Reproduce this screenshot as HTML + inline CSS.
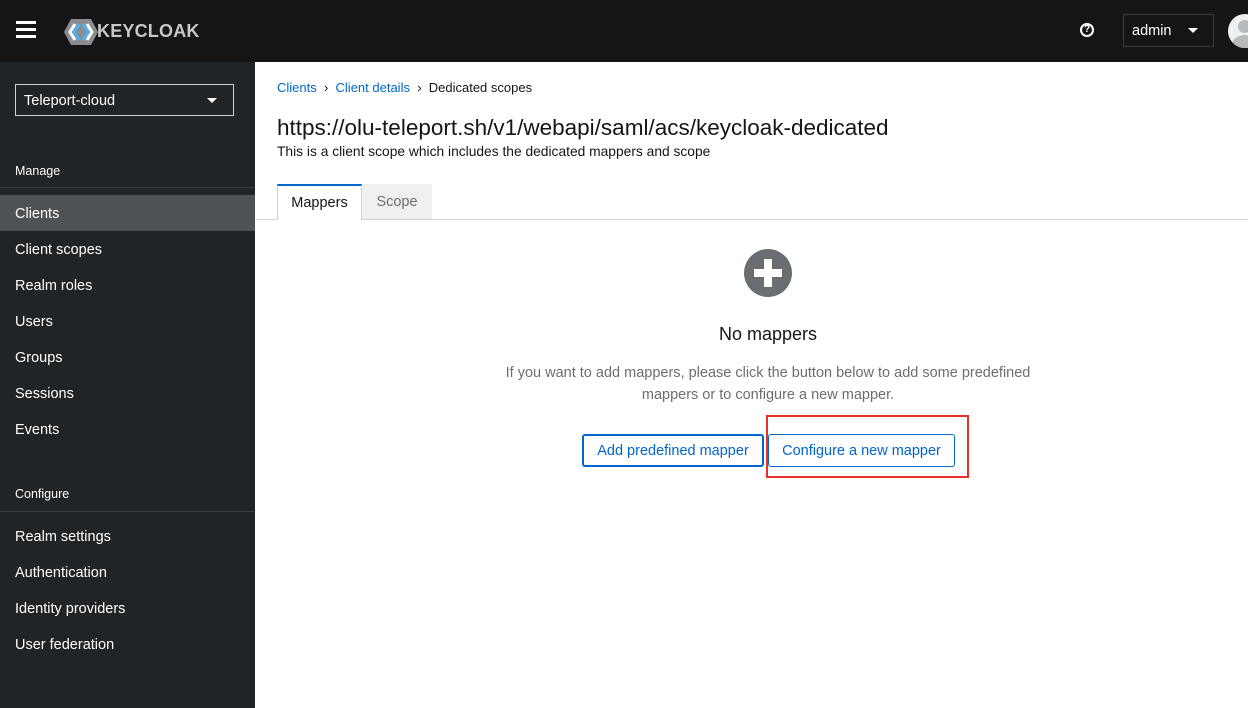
<!DOCTYPE html>
<html><head><style>
*{margin:0;padding:0;box-sizing:border-box}
body{width:1248px;height:708px;overflow:hidden;font-family:"Liberation Sans",sans-serif;background:#fff;position:relative}
.hdr{position:absolute;left:0;top:0;width:1248px;height:62px;background:#151515}
.side{position:absolute;left:0;top:62px;width:255px;height:646px;background:#212427;color:#fff}
.a{position:absolute}
.nav{position:absolute;left:15px;font-size:14.5px;color:#fff}
.sep{position:absolute;left:0;width:255px;height:1px;background:#3c3f42}
</style></head><body>
<div class="hdr">
 <div class="a" style="left:16px;top:21px;width:20px;height:3px;background:#fff;box-shadow:0 7px 0 #fff,0 14px 0 #fff"></div>
 <svg class="a" style="left:63px;top:18px" width="36" height="28" viewBox="0 0 36 28"><polygon points="8,1 28,1 35,14 28,27 8,27 1,14" fill="#8a8d90"/><path d="M12 6 L7 14 L12 22" stroke="#fff" stroke-width="3" fill="none"/><path d="M16 6 L11 14 L16 22" stroke="#4bb4ec" stroke-width="3" fill="none"/><path d="M20 6 L25 14 L20 22" stroke="#4bb4ec" stroke-width="3" fill="none"/><path d="M24 6 L29 14 L24 22" stroke="#fff" stroke-width="3" fill="none"/></svg>
 <div class="a" style="left:97px;top:21px;font-size:18px;font-weight:bold;color:#c7c7c7;letter-spacing:0.2px">KEYCLOAK</div>
 <div class="a" style="left:1080px;top:23px;width:14px;height:14px;border:2px solid #fff;border-radius:50%;color:#fff;font-size:10px;font-weight:bold;text-align:center;line-height:10px">?</div>
 <div class="a" style="left:1123px;top:14px;width:91px;height:33px;border:1px solid #3c3f42;color:#fff;font-size:14.5px;padding:8px 0 0 8px">admin<span class="a" style="left:64px;top:13px;border:5px solid transparent;border-top:5px solid #fff"></span></div>
 <div class="a" style="left:1228px;top:14px;width:34px;height:34px;border-radius:50%;background:#f0f0f0;overflow:hidden"><div class="a" style="left:10px;top:6px;width:13px;height:13px;border-radius:50%;background:#b8bbbe"></div><div class="a" style="left:4px;top:21px;width:26px;height:20px;border-radius:50%;background:#b8bbbe"></div></div>
</div>
<div class="side">
 <div class="a" style="left:15px;top:22px;width:219px;height:32px;border:1px solid #d2d2d2;padding:8px 0 0 8px;font-size:14.5px">Teleport-cloud<span class="a" style="left:191px;top:13px;border:5px solid transparent;border-top:5px solid #fff"></span></div>
 <div class="nav" style="top:102px;font-size:12.5px">Manage</div>
 <div class="sep" style="top:125px"></div>
 <div class="a" style="left:0;top:133px;width:255px;height:36px;background:#4f5255"></div>
 <div class="nav" style="top:144px">Clients</div>
 <div class="nav" style="top:180px">Client scopes</div>
 <div class="nav" style="top:216px">Realm roles</div>
 <div class="nav" style="top:252px">Users</div>
 <div class="nav" style="top:288px">Groups</div>
 <div class="nav" style="top:324px">Sessions</div>
 <div class="nav" style="top:360px">Events</div>
 <div class="nav" style="top:425px;font-size:12.5px">Configure</div>
 <div class="sep" style="top:449px"></div>
 <div class="nav" style="top:467px">Realm settings</div>
 <div class="nav" style="top:503px">Authentication</div>
 <div class="nav" style="top:539px">Identity providers</div>
 <div class="nav" style="top:575px">User federation</div>
</div>
<div class="a" style="left:277px;top:80px;font-size:13px;color:#151515"><span style="color:#06c">Clients</span> &nbsp;›&nbsp; <span style="color:#06c">Client details</span> &nbsp;›&nbsp; Dedicated scopes</div>
<div class="a" style="left:277px;top:115px;font-size:22.5px;color:#151515">https://olu-teleport.sh/v1/webapi/saml/acs/keycloak-dedicated</div>
<div class="a" style="left:277px;top:144px;font-size:13.8px;color:#151515">This is a client scope which includes the dedicated mappers and scope</div>
<div class="a" style="left:256px;top:219px;width:992px;height:1px;background:#d2d2d2"></div>
<div class="a" style="left:277px;top:184px;width:85px;height:36px;border:1px solid #d2d2d2;border-bottom:none;border-top:2px solid #06c;background:#fff;font-size:14.5px;color:#151515;text-align:center;padding-top:9px">Mappers</div>
<div class="a" style="left:362px;top:184px;width:70px;height:35px;background:#f0f0f0;font-size:14.5px;color:#6a6e73;text-align:center;padding-top:10px">Scope</div>
<svg class="a" style="left:744px;top:249px" width="48" height="48" viewBox="0 0 48 48"><circle cx="24" cy="24" r="24" fill="#6a6e73"/><rect x="20" y="10" width="8" height="28" fill="#fff"/><rect x="10" y="20" width="28" height="8" fill="#fff"/></svg>
<div class="a" style="left:568px;top:324px;width:400px;text-align:center;font-size:18px;color:#151515">No mappers</div>
<div class="a" style="left:488px;top:362px;width:560px;text-align:center;font-size:14.5px;line-height:22px;color:#6a6e73">If you want to add mappers, please click the button below to add some predefined<br>mappers or to configure a new mapper.</div>
<div class="a" style="left:582px;top:434px;width:182px;height:33px;border:2px solid #06c;border-radius:3px;color:#06c;font-size:14.5px;text-align:center;padding-top:7px">Add predefined mapper</div>
<div class="a" style="left:768px;top:434px;width:187px;height:33px;border:1px solid #06c;border-radius:3px;color:#06c;font-size:14.5px;text-align:center;padding-top:8px">Configure a new mapper</div>
<div class="a" style="left:766px;top:415px;width:203px;height:63px;border:2px solid #e8312b"></div>
</body></html>
